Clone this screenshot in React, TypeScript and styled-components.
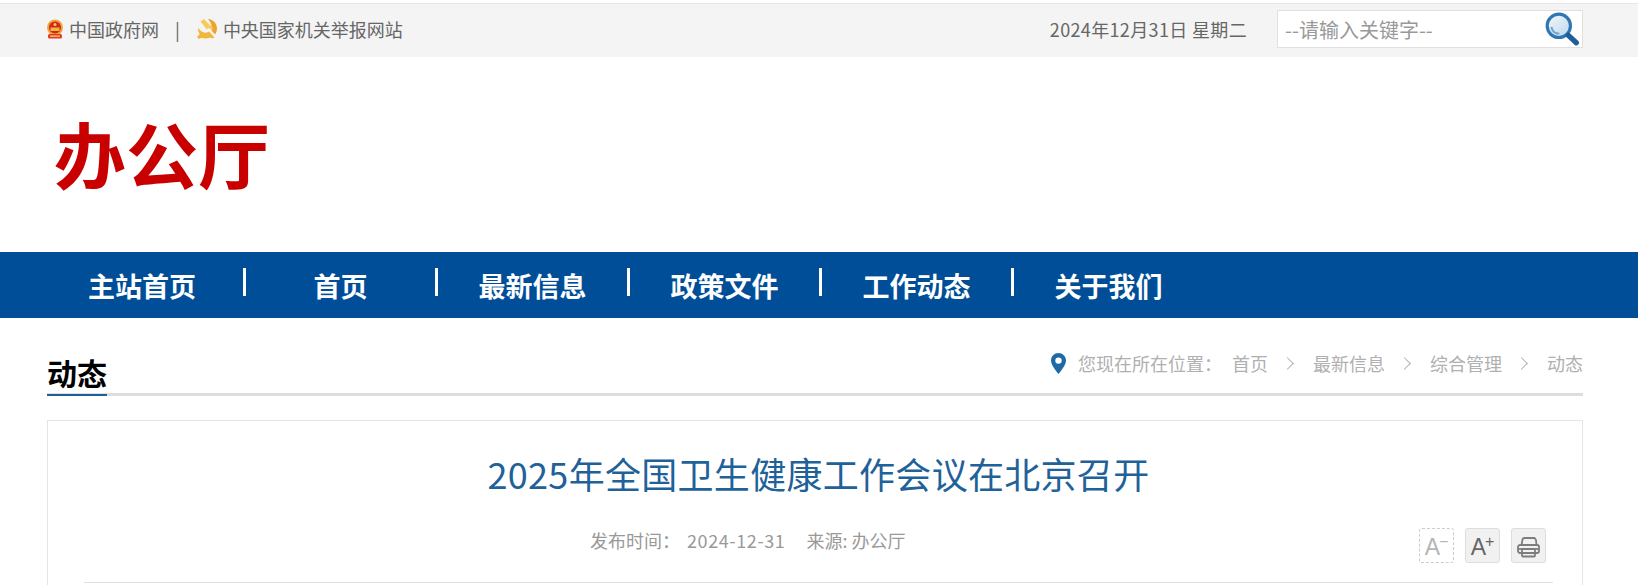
import React from 'react';
import styled, { createGlobalStyle } from 'styled-components';

const GlobalStyle = createGlobalStyle`
  html, body {
    margin: 0;
    padding: 0;
    background: #fff;
    overflow: hidden;
  }
  body {
    font-family: "Noto Sans CJK SC", "Liberation Sans", sans-serif;
  }
`;

const navItems = ['首页', '最新信息', '政策文件', '工作动态', '关于我们'];
const crumbs = ['首页', '最新信息', '综合管理', '动态'];

const EmblemIcon = () => (
  <svg width="16" height="20" viewBox="0 0 16 20">
    <circle cx="8" cy="8.500" r="8" fill="#eda63a" />
    <circle cx="8" cy="8.500" r="6" fill="#d4261b" />
    <circle cx="8" cy="5.500" r="1.500" fill="#f6cf5f" />
    <rect x="3.500" y="8.500" width="9" height="3.500" fill="#efb63f" />
    <rect x="1" y="15" width="14" height="4.500" rx="1.500" fill="#e2382c" />
    <rect x="3" y="16.500" width="10" height="1.300" fill="#f6cf5f" />
  </svg>
);

const PartyIcon = () => (
  <svg width="20" height="20" viewBox="0 0 20 20">
    <path d="M11 0c5.500.5 9 4.500 9 9.500 0 2.500-.8 4.500-2 6l-3.500-4C15.500 8 14.500 4 11 0z" fill="#eca52a" />
    <path d="M3.500 2.500L7 0l6 6.500 1.500-1 1.500 5.500-5-2-1.200 1.500z" fill="#f6cb58" />
    <path d="M1.500 9c1.500 3 5 5.500 8.500 4.500l2-1 5.500 6c-1.500 1-3 1-4.500 0-3 1.500-6 1.200-8.500.2L2 20l-2-2 2.800-3C1.300 13.500.8 11 1.500 9z" fill="#f1b63a" />
  </svg>
);

const SearchIcon = () => (
  <svg width="36" height="36" viewBox="0 0 34 34">
    <defs>
      <linearGradient id="lens" x1="0" y1="0" x2="1" y2="1">
        <stop offset="0" stopColor="#f4f9fd" />
        <stop offset="1" stopColor="#bcd6ea" />
      </linearGradient>
    </defs>
    <circle cx="14" cy="14" r="11" fill="url(#lens)" stroke="#2f77b3" strokeWidth="3" />
    <path d="M7 15c.5 4 3.500 6.500 7.500 6.500" fill="none" stroke="#6ea3cc" strokeWidth="2" />
    <path d="M23 23l7.500 7" stroke="#1f5f99" strokeWidth="5" strokeLinecap="round" />
  </svg>
);

const PinIcon = () => (
  <svg width="15" height="21" viewBox="0 0 15 21">
    <path
      fillRule="evenodd"
      d="M7.500 0C3.400 0 0 3.300 0 7.400c0 4.600 5 10.100 7.500 13.600C10 17.500 15 12 15 7.400 15 3.300 11.600 0 7.500 0zm0 4.400a3.200 3.200 0 110 6.400 3.200 3.200 0 010-6.400z"
      fill="#1f6aa5"
    />
  </svg>
);

const PrintIcon = () => (
  <svg width="23" height="21" viewBox="0 0 23 21" fill="none" stroke="#7d7d7d" strokeWidth="1.800">
    <path d="M4.500 8l1-5.500C5.700 1.500 6.500 1 7.500 1h10l1.500 2 .5 5" />
    <rect x="1" y="8" width="21" height="8" rx="2" />
    <path d="M1 12h21" />
    <rect x="5" y="12" width="13" height="7.500" rx="1" />
  </svg>
);

export default function App() {
  return (
    <>
      <GlobalStyle />
      <Page>
        <TopBar>
          <TopLinks>
            <TopLink>
              <EmblemIcon />
              中国政府网
            </TopLink>
            <TopSeparator>|</TopSeparator>
            <TopLink>
              <PartyIcon />
              中央国家机关举报网站
            </TopLink>
          </TopLinks>
          <TopRight>
            <DateText>2024年12月31日 星期二</DateText>
            <SearchBox>
              <SearchText>--请输入关键字--</SearchText>
              <SearchIcon />
            </SearchBox>
          </TopRight>
        </TopBar>

        <Banner>
          <Logo>办公厅</Logo>
        </Banner>

        <Nav>
          <FirstNavLink>主站首页</FirstNavLink>
          <NavDivider />
          {navItems.map((item, i) => (
            <React.Fragment key={item}>
              <NavLink>{item}</NavLink>
              {i < navItems.length - 1 && <NavDivider />}
            </React.Fragment>
          ))}
        </Nav>

        <Main>
          <SectionHead>
            <SectionTitle>动态</SectionTitle>
            <Breadcrumb>
              <PinIcon />
              <CrumbLabel>您现在所在位置：</CrumbLabel>
              {crumbs.map((crumb, i) => (
                <React.Fragment key={crumb}>
                  <span>{crumb}</span>
                  {i < crumbs.length - 1 && <CrumbArrow />}
                </React.Fragment>
              ))}
            </Breadcrumb>
          </SectionHead>

          <Card>
            <ArticleTitle>2025年全国卫生健康工作会议在北京召开</ArticleTitle>
            <MetaRow>
              <MetaInfo>
                <MetaLabel>发布时间：</MetaLabel>
                <MetaDate>2024-12-31</MetaDate>
                <span>来源: 办公厅</span>
              </MetaInfo>
              <Tools>
                <ToolButton $disabled>
                  A<ToolMark>−</ToolMark>
                </ToolButton>
                <ToolButton>
                  A<ToolMark>+</ToolMark>
                </ToolButton>
                <ToolButton>
                  <PrintIcon />
                </ToolButton>
              </Tools>
            </MetaRow>
          </Card>
        </Main>
      </Page>
    </>
  );
}

const Page = styled.div`
  width: 1638px;
  height: 585px;
  overflow: hidden;
  padding-top: 3px;
  box-sizing: border-box;
`;

const TopBar = styled.div`
  display: flex;
  align-items: center;
  justify-content: space-between;
  height: 54px;
  box-sizing: border-box;
  padding: 0 55px 3px 47px;
  background: #f4f4f4;
  border-top: 1px solid #e6e6e6;
  color: #666;
  font-size: 18px;
`;

const TopLinks = styled.div`
  display: flex;
  align-items: center;
`;

const TopLink = styled.a`
  display: flex;
  align-items: center;
  gap: 6px;
`;

const TopSeparator = styled.span`
  margin: 0 17px 0 16px;
  font-size: 18px;
`;

const TopRight = styled.div`
  display: flex;
  align-items: center;
  gap: 30px;
`;

const DateText = styled.span`
  color: #666;
  letter-spacing: 0.35px;
`;

const SearchBox = styled.div`
  display: flex;
  align-items: center;
  justify-content: space-between;
  width: 306px;
  height: 38px;
  box-sizing: border-box;
  padding: 0 2px 0 7px;
  background: #fff;
  border: 1px solid #e0e0e0;
`;

const SearchText = styled.span`
  color: #999;
  font-size: 20px;
`;

const Banner = styled.div`
  height: 195px;
  padding-left: 54px;
  display: flex;
  align-items: center;
`;

const Logo = styled.div`
  color: #c90000;
  font-size: 72px;
  font-weight: 700;
  line-height: 1;
  margin-top: -5px;
`;

const Nav = styled.nav`
  display: flex;
  align-items: center;
  height: 66px;
  padding-left: 88px;
  background: #004e98;
  color: #fff;
  font-size: 27px;
  font-weight: 700;
`;

const FirstNavLink = styled.a`
  width: 155px;
`;

const NavLink = styled.a`
  width: 189px;
  text-align: center;
`;

const NavDivider = styled.i`
  width: 3px;
  height: 28px;
  margin-top: -6px;
  background: #fff;
`;

const Main = styled.main`
  padding: 0 55px 0 47px;
`;

const SectionHead = styled.div`
  display: flex;
  align-items: flex-start;
  justify-content: space-between;
  height: 78px;
  box-sizing: border-box;
  border-bottom: 3px solid #ddd;
`;

const SectionTitle = styled.h2`
  height: 78px;
  box-sizing: border-box;
  margin: 0;
  padding-top: 33px;
  border-bottom: 2px solid #1f5f99;
  color: #000;
  font-size: 30px;
  font-weight: 700;
  line-height: 42px;
`;

const Breadcrumb = styled.div`
  display: flex;
  align-items: center;
  gap: 18px;
  margin-top: 33px;
  color: #b0b0b0;
  font-size: 18px;
  line-height: 24px;
`;

const CrumbLabel = styled.span`
  margin-left: -6px;
  margin-right: -8px;
`;

const CrumbArrow = styled.i`
  width: 8px;
  height: 8px;
  margin: 0 3px 0 -3px;
  border-top: 1px solid #b0b0b0;
  border-right: 1px solid #b0b0b0;
  transform: rotate(45deg);
`;

const Card = styled.section`
  height: 400px;
  margin-top: 24px;
  padding: 0 29px 0 36px;
  border: 1px solid #e5e5e5;
`;

const ArticleTitle = styled.h1`
  margin: 0;
  padding: 27px 0 0;
  color: #1f6199;
  font-size: 36px;
  font-weight: 400;
  letter-spacing: 0.3px;
  line-height: 50px;
  text-align: center;
`;

const MetaRow = styled.div`
  display: flex;
  align-items: flex-end;
  justify-content: space-between;
  height: 85px;
  box-sizing: border-box;
  padding: 0 7px 19px 506px;
  border-bottom: 1px solid #e2e2e2;
`;

const MetaInfo = styled.div`
  display: flex;
  gap: 21px;
  margin-bottom: 10px;
  color: #999;
  font-size: 18px;
  line-height: 26px;
`;

const MetaLabel = styled.span`
  margin-right: -14px;
`;

const MetaDate = styled.span`
  letter-spacing: 0.6px;
`;

const Tools = styled.div`
  display: flex;
  gap: 11px;
`;

const ToolButton = styled.div<{ $disabled?: boolean }>`
  display: flex;
  align-items: center;
  justify-content: center;
  width: 35px;
  height: 35px;
  box-sizing: border-box;
  border-radius: 3px;
  border: 1px ${(p) => (p.$disabled ? 'dashed #ccc' : 'solid #ddd')};
  background: ${(p) => (p.$disabled ? '#fff' : '#f1f1f1')};
  color: ${(p) => (p.$disabled ? '#b5b5b5' : '#666')};
  font-family: "Liberation Sans", sans-serif;
  font-size: 23px;
  padding-top: 4px;
`;

const ToolMark = styled.sup`
  font-size: 16px;
  line-height: 1;
  margin: -12px 0 0 -1px;
`;
